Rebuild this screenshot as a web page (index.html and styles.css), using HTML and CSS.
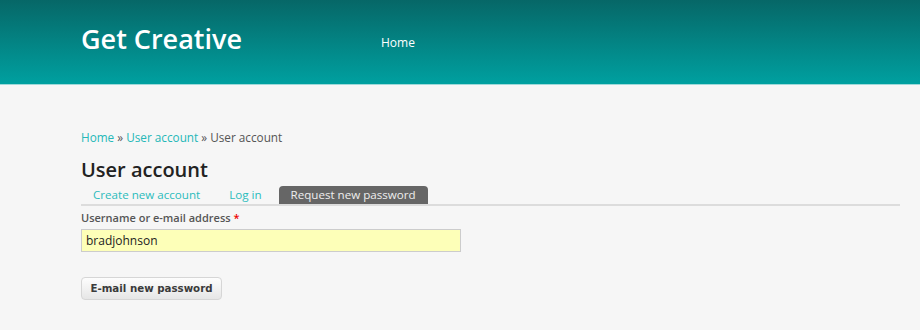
FILE: index.html
```html
<!DOCTYPE html>
<html>
<head>
<meta charset="utf-8">
<link rel="stylesheet" href="styles.css">
</head>
<body>
<header class="site-header">
  <div class="header-inner">
    <a class="site-name" href="#">Get Creative</a>
    <nav class="main-menu"><a href="#">Home</a></nav>
  </div>
</header>
<main class="main">
  <div class="breadcrumb"><a href="#">Home</a> » <a href="#">User account</a> » User account</div>
  <h1 class="page-title">User account</h1>
  <ul class="tabs">
    <li><a href="#">Create new account</a></li>
    <li><a href="#">Log in</a></li>
    <li class="active"><a href="#">Request new password</a></li>
  </ul>
  <form class="form">
    <label class="form-label" for="name">Username or e-mail address <span class="req">*</span></label>
    <input class="form-text" id="name" type="text" value="bradjohnson">
    <div class="actions"><button class="form-submit" type="button">E-mail new password</button></div>
  </form>
</main>
</body>
</html>
```
FILE: styles.css
```css
html, body { margin: 0; padding: 0; }
body {
  background: #f6f6f6;
  font-family: "Open Sans", "Noto Sans", sans-serif;
  color: #3b3b3b;
}
a { text-decoration: none; }
.site-header {
  height: 84px;
  background: linear-gradient(#066767, #00a0a0);
  border-bottom: 1px solid #9fd9d9;
}
.header-inner {
  display: flex;
  align-items: center;
  padding: 0 0 0 81px;
  height: 84px;
}
.site-name {
  color: #fff;
  font-size: 27px;
  font-weight: 600;
  width: 300px;
  margin-top: -8px;
}
.main-menu a {
  color: #fff;
  font-size: 12px;
  display: block;
}
.main {
  padding: 43px 20px 0 81px;
}
.breadcrumb {
  font-size: 11.75px;
  color: #555;
  line-height: 18px;
}
.breadcrumb a { color: #25b8b8; }
.page-title {
  margin: 11px 0 0;
  font-size: 20px;
  font-weight: 600;
  color: #222;
  line-height: 26px;
}
.tabs {
  list-style: none;
  margin: 3px 0 0;
  padding: 0;
  display: flex;
  border-bottom: 2px solid #dcdcdc;
  height: 18px;
}
.tabs li a {
  display: block;
  font-size: 11.6px;
  line-height: 18px;
  color: #2bbcbc;
  padding: 0 12px;
  margin-right: 5px;
}
.tabs li.active a {
  background: #666;
  color: #eee;
  border-radius: 4px 4px 0 0;
}
.form { padding-top: 4px; }
.form-label {
  display: block;
  font-size: 11px;
  font-weight: 600;
  color: #555;
  line-height: 16px;
}
.req { color: #e00; }
.form-text {
  display: block;
  box-sizing: border-box;
  margin-top: 3px;
  width: 380px;
  height: 23px;
  border: 1px solid #ccc;
  background: #fdffb8;
  font-family: "Open Sans", "Noto Sans", sans-serif;
  font-size: 12px;
  color: #222;
  padding: 0 4px;
}
.actions { margin-top: 23px; }
.form-submit {
  box-sizing: border-box;
  height: 23px;
  width: 141px;
  border: 1px solid #d6d6d6;
  border-radius: 4px;
  background: linear-gradient(#fdfdfd, #e6e6e6);
  font-family: "DejaVu Sans", sans-serif;
  font-weight: bold;
  font-size: 10.25px;
  color: #3a3a3a;
  padding: 0;
}
```
